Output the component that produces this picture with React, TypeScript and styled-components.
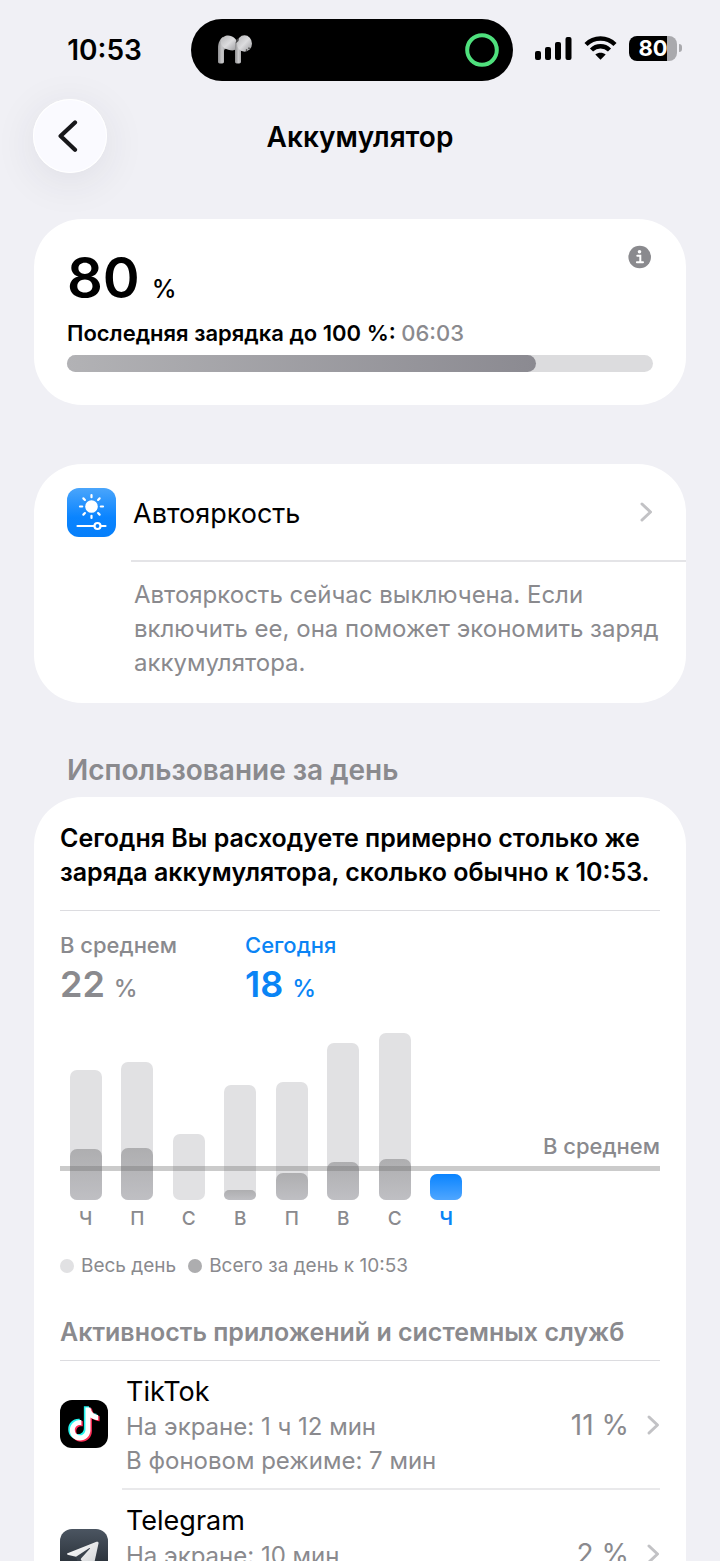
import React from "react";
import styled, { createGlobalStyle } from "styled-components";

const GlobalStyle = createGlobalStyle`
  *, *::before, *::after { box-sizing: border-box; }
  body {
    margin: 0;
    background: #f0f0f5;
    color: #000;
    font-family: Inter, "Liberation Sans", sans-serif;
  }
  h1, h2, h3, p, ul, dl, dd, dt { margin: 0; padding: 0; }
  ul { list-style: none; }
  a { color: inherit; text-decoration: none; }
  button { font: inherit; color: inherit; border: 0; cursor: pointer; }
`;

const GRAY = "#8a8a8e";
const BLUE = "#0a84f5";

const Screen = styled.div`
  display: flex;
  flex-direction: column;
  height: 100vh;
  overflow: hidden auto;
  scrollbar-width: none;
`;

/* ---------- Status bar ---------- */

const StatusBar = styled.header`
  display: grid;
  grid-template-columns: 1fr 322px 1fr;
  align-items: center;
  flex: none;
  padding: 19px 16px 0 0;
`;

const Clock = styled.time`
  padding-left: 18px;
  text-align: center;
  font-size: 28px;
  line-height: 34px;
  font-weight: 600;
`;

const Island = styled.div`
  display: flex;
  align-items: center;
  justify-content: space-between;
  height: 62px;
  padding: 0 14px 0 26px;
  border-radius: 31px;
  background: #000;
`;

const StatusIcons = styled.div`
  display: flex;
  align-items: center;
  gap: 12px;
  padding: 0 0 4px 22px;
`;

const Battery = styled.div`
  display: flex;
  align-items: center;
  gap: 2px;
`;

const BatteryBody = styled.div`
  width: 48px;
  height: 25px;
  border-radius: 8px;
  background: linear-gradient(90deg, #000 80%, #a9a9ad 80%);
  color: #fff;
  font-size: 22px;
  line-height: 25px;
  font-weight: 700;
  text-align: center;
`;

const BatteryCap = styled.div`
  width: 3px;
  height: 8px;
  border-radius: 0 3px 3px 0;
  background: #a9a9ad;
`;

/* ---------- Navigation ---------- */

const NavBar = styled.nav`
  display: grid;
  grid-template-columns: 74px 1fr 74px;
  align-items: center;
  flex: none;
  padding: 18px 33px 0;
`;

const BackButton = styled.button`
  display: grid;
  place-items: center;
  width: 74px;
  height: 74px;
  padding: 0;
  border-radius: 50%;
  background: #fafaff;
  box-shadow: 0 8px 44px rgba(40, 40, 70, 0.09), inset 0 0 0 1px #fff;
`;

const Title = styled.h1`
  padding-top: 2px;
  text-align: center;
  font-size: 28px;
  line-height: 34px;
  font-weight: 600;
`;

/* ---------- Cards ---------- */

const Content = styled.main`
  flex: none;
  padding: 46px 34px 0;
`;

const Card = styled.section`
  border-radius: 48px;
  background: #fff;
`;

const ChargeCard = styled(Card)`
  padding: 26px 33px 33px;
`;

const ChargeTop = styled.div`
  display: flex;
  align-items: flex-start;
  justify-content: space-between;
  padding-right: 1px;
`;

const Level = styled.p`
  display: flex;
  align-items: baseline;
  gap: 12px;
  font-size: 56px;
  line-height: 66px;
  font-weight: 600;
`;

const LevelUnit = styled.span`
  font-size: 25px;
  line-height: 28px;
  font-weight: 500;
`;

const InfoButton = styled.button`
  display: grid;
  padding: 0;
  background: none;
`;

const LastCharge = styled.p`
  margin-top: 8px;
  font-size: 22px;
  line-height: 28px;
  font-weight: 600;
`;

const LastChargeTime = styled.span`
  color: ${GRAY};
  font-weight: 500;
`;

const Track = styled.div`
  height: 17px;
  margin-top: 8px;
  border-radius: 9px;
  background: #dcdcde;
`;

const TrackFill = styled.div`
  height: 100%;
  border-radius: 9px;
  background: linear-gradient(90deg, #b2b2b5, #8b8a91);
`;

const TipCard = styled(Card)`
  margin-top: 59px;
  padding-left: 33px;
`;

const TipLink = styled.a`
  display: flex;
  align-items: center;
  gap: 17px;
  height: 96px;
  padding-right: 33px;
`;

const TipTitle = styled.span`
  flex: 1;
  padding-top: 3px;
  font-size: 27px;
  line-height: 34px;
`;

const TipText = styled.p`
  margin-left: 64px;
  padding: 16px 16px 23px 3px;
  border-top: 2px solid #e4e4e7;
  color: ${GRAY};
  font-size: 24px;
  line-height: 34px;
`;

const SectionTitle = styled.h2`
  margin: 50px 33px 10px;
  color: ${GRAY};
  font-size: 28px;
  line-height: 34px;
  font-weight: 600;
`;

const UsageCard = styled(Card)`
  padding: 24px 26px 33px;
`;

const Summary = styled.p`
  padding-bottom: 21px;
  border-bottom: 1px solid #dcdce0;
  font-size: 25px;
  line-height: 34px;
  font-weight: 600;
`;

const Stats = styled.dl`
  display: flex;
  padding-top: 20px;
`;

const Stat = styled.div<{ $active?: boolean }>`
  width: 185px;
  color: ${(p) => (p.$active ? BLUE : GRAY)};
`;

const StatLabel = styled.dt`
  font-size: 22px;
  line-height: 28px;
  font-weight: 500;
`;

const StatValue = styled.dd`
  display: flex;
  align-items: baseline;
  gap: 9px;
  font-size: 36px;
  line-height: 50px;
  font-weight: 600;
`;

const StatUnit = styled.span`
  font-size: 24px;
  line-height: 28px;
  font-weight: 500;
`;

/* ---------- Chart ---------- */

const Chart = styled.div`
  position: relative;
  margin-top: 24px;
`;

const Bars = styled.ul`
  display: grid;
  grid-template-columns: repeat(8, 1fr);
  width: 412px;
`;

const Day = styled.li<{ $active?: boolean }>`
  display: flex;
  flex-direction: column;
  align-items: center;
  color: ${(p) => (p.$active ? BLUE : GRAY)};
  font-size: 19px;
  line-height: 24px;
  font-weight: ${(p) => (p.$active ? 600 : 500)};
`;

const Plot = styled.div`
  display: flex;
  align-items: flex-end;
  height: 167px;
  margin-bottom: 7px;
`;

const WholeDay = styled.div`
  display: flex;
  align-items: flex-end;
  width: 32px;
  border-radius: 7px;
  background: #e1e1e3;
`;

const PartDay = styled.div<{ $active?: boolean }>`
  width: 32px;
  border-radius: 7px;
  background: ${(p) =>
    p.$active
      ? "linear-gradient(#0a84ff, #4fa6ff)"
      : "linear-gradient(#aeaeb0, #bfbfc3)"};
`;

const Average = styled.div`
  position: absolute;
  right: 0;
  bottom: 60px;
  left: 0;
  border-bottom: 5px solid rgba(110, 110, 112, 0.36);
  color: ${GRAY};
  font-size: 22px;
  line-height: 40px;
  font-weight: 500;
  text-align: right;
`;

const Legend = styled.ul`
  display: flex;
  gap: 12px;
  margin-top: 23px;
  color: ${GRAY};
  font-size: 19px;
  line-height: 24px;
`;

const LegendItem = styled.li<{ $color: string }>`
  display: flex;
  align-items: center;
  gap: 7px;

  &::before {
    content: "";
    width: 14px;
    height: 14px;
    border-radius: 50%;
    background: ${(p) => p.$color};
  }
`;

/* ---------- App list ---------- */

const ListTitle = styled.h3`
  margin-top: 37px;
  padding-bottom: 11px;
  border-bottom: 1px solid #dcdce0;
  color: ${GRAY};
  font-size: 25px;
  line-height: 34px;
  font-weight: 600;
`;

const AppLink = styled.a`
  display: flex;
  align-items: center;
  gap: 14px;

  & > svg {
    margin-bottom: 3px;
  }
`;

const AppBody = styled.div`
  display: flex;
  align-items: center;
  flex: 1;
  height: 129px;
  padding-left: 4px;
  border-bottom: 2px solid #e9e9eb;
`;

const AppText = styled.div`
  flex: 1;
  padding-top: 2px;
  color: ${GRAY};
  font-size: 24px;
  line-height: 34px;
`;

const AppName = styled.div`
  color: #000;
  font-size: 27px;
  line-height: 36px;
`;

const AppShare = styled.span`
  margin-right: 17px;
  color: ${GRAY};
  font-size: 28px;
  line-height: 34px;
`;

/* ---------- Drawings ---------- */

const Chevron = () => (
  <svg width="14" height="24" viewBox="0 0 14 24" fill="none" aria-hidden>
    <path d="M3 4l8.500 8L3 20" stroke="#c2c2c5" strokeWidth="3" strokeLinecap="round" strokeLinejoin="round" />
  </svg>
);

const BackIcon = () => (
  <svg width="24" height="36" viewBox="0 0 24 36" fill="none" aria-hidden>
    <path d="M17 4.500L2.600 18L17 31.800" stroke="#17171b" strokeWidth="4.200" strokeLinecap="round" strokeLinejoin="round" />
  </svg>
);

const EarbudsIcon = () => (
  <svg width="36" height="30" viewBox="0 0 36 30" aria-hidden>
    <defs>
      <linearGradient id="stem" x1="0" y1="0" x2="1" y2="0">
        <stop offset="0" stopColor="#8e8e90" />
        <stop offset="0.500" stopColor="#c9c9cb" />
        <stop offset="1" stopColor="#a2a2a4" />
      </linearGradient>
      <linearGradient id="bud" x1="0" y1="0" x2="1" y2="1">
        <stop offset="0" stopColor="#b4b4b6" />
        <stop offset="0.500" stopColor="#dcdcde" />
        <stop offset="1" stopColor="#98989b" />
      </linearGradient>
    </defs>
    <path d="M1 27V13C1 8 3 4 6 2l3 12c-2 0-2 1-2 3v10c0 2-6 2-6 0z" fill="url(#stem)" />
    <path d="M4 6C5 2 8 .5 11 .5c5 0 9 4 9.500 8 .3 4-2 7-5 7C10 15.500 3 12 4 6z" fill="url(#bud)" />
    <path d="M18 27V11c0-3 1-5 3-6l4 11h-1v11c0 2-6 2-6 0z" fill="url(#stem)" />
    <ellipse cx="27.500" cy="8.500" rx="7.500" ry="8.200" fill="url(#bud)" />
    <path d="M18.500 8.500l1-4 2.500-1.500-.500 3z" fill="#48484a" />
    <path d="M29 15.500l4-3" stroke="#444" strokeWidth="1.500" strokeDasharray="1.500 1.500" />
  </svg>
);

const RingIcon = () => (
  <svg width="34" height="34" viewBox="0 0 34 34" fill="none" aria-hidden>
    <circle cx="17" cy="17" r="14.800" stroke="#4fe07d" strokeWidth="4" />
  </svg>
);

const SignalIcon = () => (
  <svg width="37" height="24" viewBox="0 0 37 24" aria-hidden>
    <rect x="0" y="15" width="6" height="9" rx="2" />
    <rect x="10" y="11" width="6" height="13" rx="2" />
    <rect x="20" y="6" width="6" height="18" rx="2" />
    <rect x="30.500" y="1" width="6" height="23" rx="2" />
  </svg>
);

const WifiIcon = () => (
  <svg width="33" height="24" viewBox="0 0 33 24" fill="none" aria-hidden>
    <path d="M2 8.500C10 0.500 23 0.500 31 8.500" stroke="#000" strokeWidth="4.400" />
    <path d="M7.500 14C12.500 9 20.500 9 25.500 14" stroke="#000" strokeWidth="4.400" />
    <path d="M11.300 18.600c3-2.600 7.400-2.600 10.400 0L16.500 23.800z" fill="#000" />
  </svg>
);

const InfoIcon = () => (
  <svg width="24" height="24" viewBox="0 0 24 24" fill="none" aria-hidden>
    <circle cx="11.700" cy="12" r="11.300" fill={GRAY} />
    <circle cx="11.500" cy="6.700" r="1.800" fill="#fff" />
    <path d="M9.300 10.700H12.300V17.200M8.900 17.300H15" stroke="#fff" strokeWidth="2" strokeLinecap="round" />
  </svg>
);

const BrightnessIcon = () => (
  <svg width="49" height="49" viewBox="0 0 49 49" aria-hidden>
    <defs>
      <linearGradient id="sky" x1="0" y1="0" x2="0" y2="1">
        <stop offset="0" stopColor="#4aa5fb" />
        <stop offset="0.600" stopColor="#0a84ff" />
        <stop offset="1" stopColor="#067ffa" />
      </linearGradient>
    </defs>
    <rect width="49" height="49" rx="12" fill="url(#sky)" />
    <circle cx="24.500" cy="18.500" r="6.300" fill="#fff" />
    <g stroke="#fff" strokeWidth="2.200" strokeLinecap="round">
      {[0, 45, 90, 135, 180, 225, 270, 315].map((a) => (
        <path key={a} d="M24.500 9.200V7" transform={`rotate(${a} 24.500 18.500)`} />
      ))}
      <path d="M10.500 38H27M34 38H38.500" />
      <circle cx="30.500" cy="38" r="3" fill="none" />
    </g>
  </svg>
);

const NOTE =
  "M25 6.500h5.200c.6 4.700 3.500 7.500 8 7.900v5.200c-3-.1-5.700-1-8-2.700v12.700c0 7-5 11.400-11 11.400-6.300 0-10.500-4.800-10.500-10.700 0-6.600 5.400-11.300 12-10.700v5.400c-3.300-.8-6.800 1.300-6.800 5 0 3 2.300 5.500 5.400 5.500 3.300 0 5.700-2.700 5.700-6.100z";

const TikTokIcon = () => (
  <svg width="48" height="48" viewBox="0 0 48 48" aria-hidden>
    <rect width="48" height="48" rx="12" fill="#000" />
    <g transform="translate(1.200 1) scale(.96)">
      <path d={NOTE} fill="#25f4ee" transform="translate(-1.400 -1)" />
      <path d={NOTE} fill="#fe2c55" transform="translate(1.800 1.400)" />
      <path d={NOTE} fill="#fff" transform="translate(.3 .2)" />
    </g>
  </svg>
);

const TelegramIcon = () => (
  <svg width="48" height="48" viewBox="0 0 48 48" aria-hidden>
    <defs>
      <linearGradient id="slate" x1="0" y1="0" x2="0" y2="1">
        <stop offset="0" stopColor="#4b5561" />
        <stop offset="1" stopColor="#1f252c" />
      </linearGradient>
      <linearGradient id="plane" x1="0" y1="0" x2="1" y2="1">
        <stop offset="0" stopColor="#fff" />
        <stop offset="1" stopColor="#cfd1d4" />
      </linearGradient>
    </defs>
    <rect width="48" height="48" rx="12" fill="url(#slate)" />
    <path d="M7.500 24.300L36.500 12.800c1.400-.5 2.300.2 2 1.800l-4.800 22c-.4 1.700-1.600 2-3 1.200L16 27.800l-7.500-1.800c-1.700-.4-1.800-1.200-1-1.700z" fill="url(#plane)" />
    <path d="M16 27.800L29 19.300c.8-.5 1.300-.1.800.5L21 29.500l-1 7c-.9 0-1.300-.4-1.700-1.600z" fill="#3a424c" />
  </svg>
);

/* ---------- Data ---------- */

const days = [
  { label: "Ч", whole: 130, part: 51 },
  { label: "П", whole: 138, part: 52 },
  { label: "С", whole: 66, part: 0 },
  { label: "В", whole: 115, part: 10 },
  { label: "П", whole: 118, part: 27 },
  { label: "В", whole: 157, part: 38 },
  { label: "С", whole: 167, part: 41 },
  { label: "Ч", whole: 26, part: 26, today: true },
];

const apps = [
  {
    name: "TikTok",
    lines: ["На экране: 1 ч 12 мин", "В фоновом режиме: 7 мин"],
    share: "11 %",
    Icon: TikTokIcon,
  },
  {
    name: "Telegram",
    lines: ["На экране: 10 мин", "В фоновом режиме: 2 мин"],
    share: "2 %",
    Icon: TelegramIcon,
  },
];

export default function App() {
  return (
    <Screen>
      <GlobalStyle />
      <StatusBar>
        <Clock>10:53</Clock>
        <Island>
          <EarbudsIcon />
          <RingIcon />
        </Island>
        <StatusIcons>
          <SignalIcon />
          <WifiIcon />
          <Battery>
            <BatteryBody>80</BatteryBody>
            <BatteryCap />
          </Battery>
        </StatusIcons>
      </StatusBar>

      <NavBar>
        <BackButton type="button" aria-label="Назад">
          <BackIcon />
        </BackButton>
        <Title>Аккумулятор</Title>
      </NavBar>

      <Content>
        <ChargeCard>
          <ChargeTop>
            <Level>
              80 <LevelUnit>%</LevelUnit>
            </Level>
            <InfoButton type="button" aria-label="Информация">
              <InfoIcon />
            </InfoButton>
          </ChargeTop>
          <LastCharge>
            Последняя зарядка до 100 %: <LastChargeTime>06:03</LastChargeTime>
          </LastCharge>
          <Track>
            <TrackFill style={{ width: "80%" }} />
          </Track>
        </ChargeCard>

        <TipCard>
          <TipLink href="#brightness">
            <BrightnessIcon />
            <TipTitle>Автояркость</TipTitle>
            <Chevron />
          </TipLink>
          <TipText>
            Автояркость сейчас выключена. Если включить ее, она поможет экономить заряд аккумулятора.
          </TipText>
        </TipCard>

        <SectionTitle>Использование за день</SectionTitle>
        <UsageCard>
          <Summary>
            Сегодня Вы расходуете примерно столько же заряда аккумулятора, сколько обычно к 10:53.
          </Summary>
          <Stats>
            <Stat>
              <StatLabel>В среднем</StatLabel>
              <StatValue>
                22 <StatUnit>%</StatUnit>
              </StatValue>
            </Stat>
            <Stat $active>
              <StatLabel>Сегодня</StatLabel>
              <StatValue>
                18 <StatUnit>%</StatUnit>
              </StatValue>
            </Stat>
          </Stats>

          <Chart>
            <Bars>
              {days.map((d, i) => (
                <Day key={i} $active={d.today}>
                  <Plot>
                    <WholeDay style={{ height: d.whole }}>
                      <PartDay $active={d.today} style={{ height: d.part }} />
                    </WholeDay>
                  </Plot>
                  {d.label}
                </Day>
              ))}
            </Bars>
            <Average>В среднем</Average>
          </Chart>
          <Legend>
            <LegendItem $color="#e1e1e3">Весь день</LegendItem>
            <LegendItem $color="#adadaf">Всего за день к 10:53</LegendItem>
          </Legend>

          <ListTitle>Активность приложений и системных служб</ListTitle>
          <ul>
            {apps.map(({ name, lines, share, Icon }) => (
              <li key={name}>
                <AppLink href={`#${name}`}>
                  <Icon />
                  <AppBody>
                    <AppText>
                      <AppName>{name}</AppName>
                      {lines.map((line) => (
                        <div key={line}>{line}</div>
                      ))}
                    </AppText>
                    <AppShare>{share}</AppShare>
                    <Chevron />
                  </AppBody>
                </AppLink>
              </li>
            ))}
          </ul>
        </UsageCard>
      </Content>
    </Screen>
  );
}
